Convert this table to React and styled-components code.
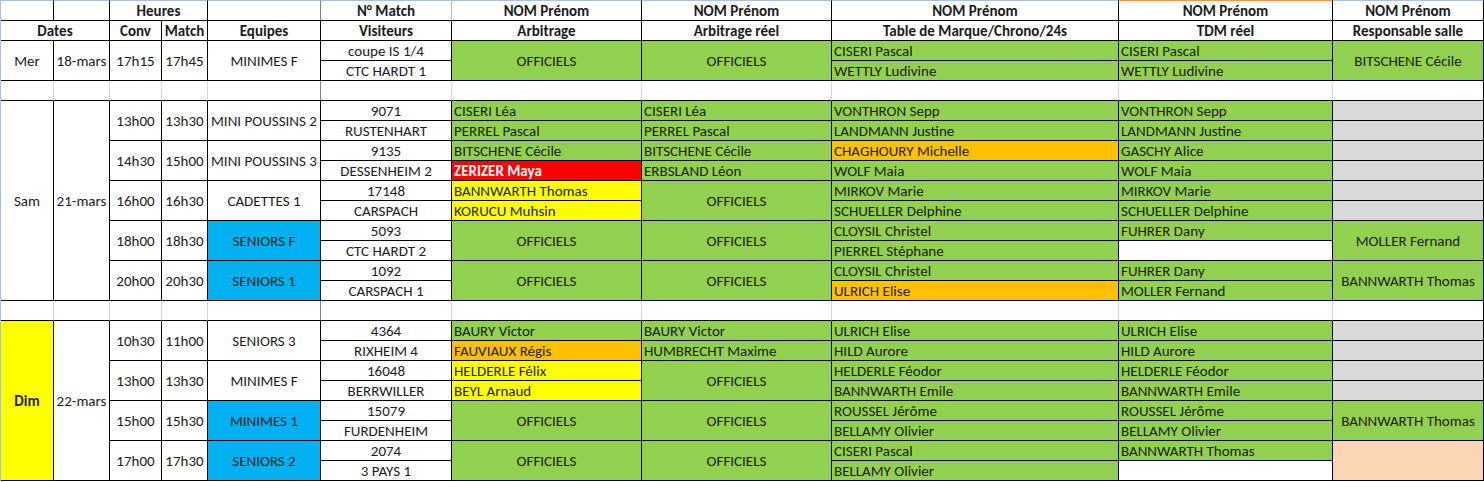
import styled, { createGlobalStyle } from "styled-components";

const GREEN = "#92d050";
const YELLOW = "#ffff00";
const RED = "#ff0000";
const ORANGE = "#ffc000";
const BLUE = "#00b0f0";
const GREY = "#d9d9d9";
const PEACH = "#fcd5b4";
const WHITE = "#ffffff";
const GRID = "#d4d4d4";
const FRAME = "#a9c1df";

const GlobalStyle = createGlobalStyle`
  body {
    margin: 0;
    background: #fff;
  }
`;

const Sheet = styled.div`
  display: grid;
  grid-template-columns: 53px 56px 52px 46px 113px 131px 190px 190px 287px 214px 151px;
  grid-template-rows: 21px;
  grid-auto-rows: 20px;
  width: max-content;
  border-left: 1px solid ${FRAME};
  font-family: Carlito, Calibri, Lato, "Liberation Sans", sans-serif;
  font-size: 15px;
  color: #1b1b1b;
`;

const Cell = styled.div`
  grid-row: ${(p) => p.$r} / span ${(p) => p.$rs || 1};
  grid-column: ${(p) => p.$c} / span ${(p) => p.$cs || 1};
  background: ${(p) => p.$bg || WHITE};
  border-right: 1px solid ${(p) => p.$vline || "#000"};
  border-bottom: 1px solid #000;
  display: flex;
  align-items: center;
  justify-content: ${(p) => (p.$left ? "flex-start" : "center")};
  padding-left: ${(p) => (p.$left ? "2px" : "0")};
  padding-top: 1px;
  font-weight: ${(p) => (p.$bold ? 700 : 400)};
  color: ${(p) => p.$color || "inherit"};
  white-space: nowrap;
  overflow: hidden;
`;

const HeadCell = styled(Cell)`
  font-weight: 700;
  border-top: ${(p) => (p.$top ? `1px solid ${p.$top}` : "none")};
`;

const matches = [
  {
    r: 3, conv: "17h15", time: "17h45", team: "MINIMES F", num: "coupe IS 1/4", vis: "CTC HARDT 1",
    arb: "OFFICIELS", arbR: "OFFICIELS",
    tab: ["CISERI Pascal", "WETTLY Ludivine"], tdm: ["CISERI Pascal", "WETTLY Ludivine"],
    resp: "BITSCHENE Cécile",
  },
  {
    r: 6, conv: "13h00", time: "13h30", team: "MINI POUSSINS 2", num: "9071", vis: "RUSTENHART",
    arb: ["CISERI Léa", "PERREL Pascal"], arbR: ["CISERI Léa", "PERREL Pascal"],
    tab: ["VONTHRON Sepp", "LANDMANN Justine"], tdm: ["VONTHRON Sepp", "LANDMANN Justine"],
    resp: "grey",
  },
  {
    r: 8, conv: "14h30", time: "15h00", team: "MINI POUSSINS 3", num: "9135", vis: "DESSENHEIM 2",
    arb: ["BITSCHENE Cécile", { t: "ZERIZER Maya", bg: RED, bold: true, color: "#fff" }],
    arbR: ["BITSCHENE Cécile", "ERBSLAND Léon"],
    tab: [{ t: "CHAGHOURY Michelle", bg: ORANGE }, "WOLF Maia"], tdm: ["GASCHY Alice", "WOLF Maia"],
    resp: "grey",
  },
  {
    r: 10, conv: "16h00", time: "16h30", team: "CADETTES 1", num: "17148", vis: "CARSPACH",
    arb: [{ t: "BANNWARTH Thomas", bg: YELLOW }, { t: "KORUCU Muhsin", bg: YELLOW }],
    arbR: "OFFICIELS",
    tab: ["MIRKOV Marie", "SCHUELLER Delphine"], tdm: ["MIRKOV Marie", "SCHUELLER Delphine"],
    resp: "grey",
  },
  {
    r: 12, conv: "18h00", time: "18h30", team: "SENIORS F", teamBg: BLUE, num: "5093", vis: "CTC HARDT 2",
    arb: "OFFICIELS", arbR: "OFFICIELS",
    tab: ["CLOYSIL Christel", "PIERREL Stéphane"], tdm: ["FUHRER Dany", { t: "", bg: WHITE }],
    resp: "MOLLER Fernand",
  },
  {
    r: 14, conv: "20h00", time: "20h30", team: "SENIORS 1", teamBg: BLUE, num: "1092", vis: "CARSPACH 1",
    arb: "OFFICIELS", arbR: "OFFICIELS",
    tab: ["CLOYSIL Christel", { t: "ULRICH Elise", bg: ORANGE }], tdm: ["FUHRER Dany", "MOLLER Fernand"],
    resp: "BANNWARTH Thomas",
  },
  {
    r: 17, conv: "10h30", time: "11h00", team: "SENIORS 3", num: "4364", vis: "RIXHEIM 4",
    arb: ["BAURY Victor", { t: "FAUVIAUX Régis", bg: ORANGE }], arbR: ["BAURY Victor", "HUMBRECHT Maxime"],
    tab: ["ULRICH Elise", "HILD Aurore"], tdm: ["ULRICH Elise", "HILD Aurore"],
    resp: "grey",
  },
  {
    r: 19, conv: "13h00", time: "13h30", team: "MINIMES F", num: "16048", vis: "BERRWILLER",
    arb: [{ t: "HELDERLE Félix", bg: YELLOW }, { t: "BEYL Arnaud", bg: YELLOW }], arbR: "OFFICIELS",
    tab: ["HELDERLE Féodor", "BANNWARTH Emile"], tdm: ["HELDERLE Féodor", "BANNWARTH Emile"],
    resp: "grey",
  },
  {
    r: 21, conv: "15h00", time: "15h30", team: "MINIMES 1", teamBg: BLUE, num: "15079", vis: "FURDENHEIM",
    arb: "OFFICIELS", arbR: "OFFICIELS",
    tab: ["ROUSSEL Jérôme", "BELLAMY Olivier"], tdm: ["ROUSSEL Jérôme", "BELLAMY Olivier"],
    resp: "BANNWARTH Thomas",
  },
  {
    r: 23, conv: "17h00", time: "17h30", team: "SENIORS 2", teamBg: BLUE, num: "2074", vis: "3 PAYS 1",
    arb: "OFFICIELS", arbR: "OFFICIELS",
    tab: ["CISERI Pascal", "BELLAMY Olivier"], tdm: ["BANNWARTH Thomas", { t: "", bg: WHITE }],
    resp: "peach",
  },
];

function NameCells({ r, c, value }) {
  if (typeof value === "string") {
    return (
      <Cell $r={r} $c={c} $rs={2} $bg={GREEN}>
        {value}
      </Cell>
    );
  }
  return value.map((v, i) => {
    const item = typeof v === "string" ? { t: v } : v;
    return (
      <Cell key={i} $r={r + i} $c={c} $bg={item.bg || GREEN} $bold={item.bold} $color={item.color} $left>
        {item.t}
      </Cell>
    );
  });
}

function RespCells({ r, value }) {
  if (value === "grey") {
    return (
      <>
        <Cell $r={r} $c={11} $bg={GREY} />
        <Cell $r={r + 1} $c={11} $bg={GREY} />
      </>
    );
  }
  if (value === "peach") return <Cell $r={r} $c={11} $rs={2} $bg={PEACH} />;
  return (
    <Cell $r={r} $c={11} $rs={2} $bg={GREEN}>
      {value}
    </Cell>
  );
}

function MatchRows({ m }) {
  return (
    <>
      <Cell $r={m.r} $c={3} $rs={2}>{m.conv}</Cell>
      <Cell $r={m.r} $c={4} $rs={2}>{m.time}</Cell>
      <Cell $r={m.r} $c={5} $rs={2} $bg={m.teamBg}>{m.team}</Cell>
      <Cell $r={m.r} $c={6}>{m.num}</Cell>
      <Cell $r={m.r + 1} $c={6}>{m.vis}</Cell>
      <NameCells r={m.r} c={7} value={m.arb} />
      <NameCells r={m.r} c={8} value={m.arbR} />
      <NameCells r={m.r} c={9} value={m.tab} />
      <NameCells r={m.r} c={10} value={m.tdm} />
      <RespCells r={m.r} value={m.resp} />
    </>
  );
}

function SpacerRow({ r }) {
  return Array.from({ length: 11 }, (_, i) => (
    <Cell key={i} $r={r} $c={i + 1} $vline={i === 4 ? "#808080" : i === 10 ? "#000" : GRID} />
  ));
}

export default function App() {
  return (
    <>
      <GlobalStyle />
      <Sheet>
        <HeadCell $r={1} $c={1} $top={FRAME} />
        <HeadCell $r={1} $c={2} $top={FRAME} />
        <HeadCell $r={1} $c={3} $cs={2} $top={FRAME}>Heures</HeadCell>
        <HeadCell $r={1} $c={5} $top={FRAME} $vline="#808080" />
        <HeadCell $r={1} $c={6} $top={FRAME} $vline={FRAME}>N° Match</HeadCell>
        <HeadCell $r={1} $c={7} $top={FRAME}>NOM Prénom</HeadCell>
        <HeadCell $r={1} $c={8} $top={FRAME}>NOM Prénom</HeadCell>
        <HeadCell $r={1} $c={9} $top={FRAME}>NOM Prénom</HeadCell>
        <HeadCell $r={1} $c={10} $top="#f79646">NOM Prénom</HeadCell>
        <HeadCell $r={1} $c={11} $top={FRAME}>NOM Prénom</HeadCell>

        <HeadCell $r={2} $c={1} $cs={2}>Dates</HeadCell>
        <HeadCell $r={2} $c={3}>Conv</HeadCell>
        <HeadCell $r={2} $c={4}>Match</HeadCell>
        <HeadCell $r={2} $c={5}>Equipes</HeadCell>
        <HeadCell $r={2} $c={6}>Visiteurs</HeadCell>
        <HeadCell $r={2} $c={7}>Arbitrage</HeadCell>
        <HeadCell $r={2} $c={8}>Arbitrage réel</HeadCell>
        <HeadCell $r={2} $c={9}>Table de Marque/Chrono/24s</HeadCell>
        <HeadCell $r={2} $c={10}>TDM réel</HeadCell>
        <HeadCell $r={2} $c={11}>Responsable salle</HeadCell>

        <Cell $r={3} $c={1} $rs={2}>Mer</Cell>
        <Cell $r={3} $c={2} $rs={2}>18-mars</Cell>
        <SpacerRow r={5} />
        <Cell $r={6} $c={1} $rs={10}>Sam</Cell>
        <Cell $r={6} $c={2} $rs={10}>21-mars</Cell>
        <SpacerRow r={16} />
        <Cell $r={17} $c={1} $rs={8} $bg={YELLOW} $bold>Dim</Cell>
        <Cell $r={17} $c={2} $rs={8}>22-mars</Cell>

        {matches.map((m) => (
          <MatchRows key={m.r} m={m} />
        ))}
      </Sheet>
    </>
  );
}
